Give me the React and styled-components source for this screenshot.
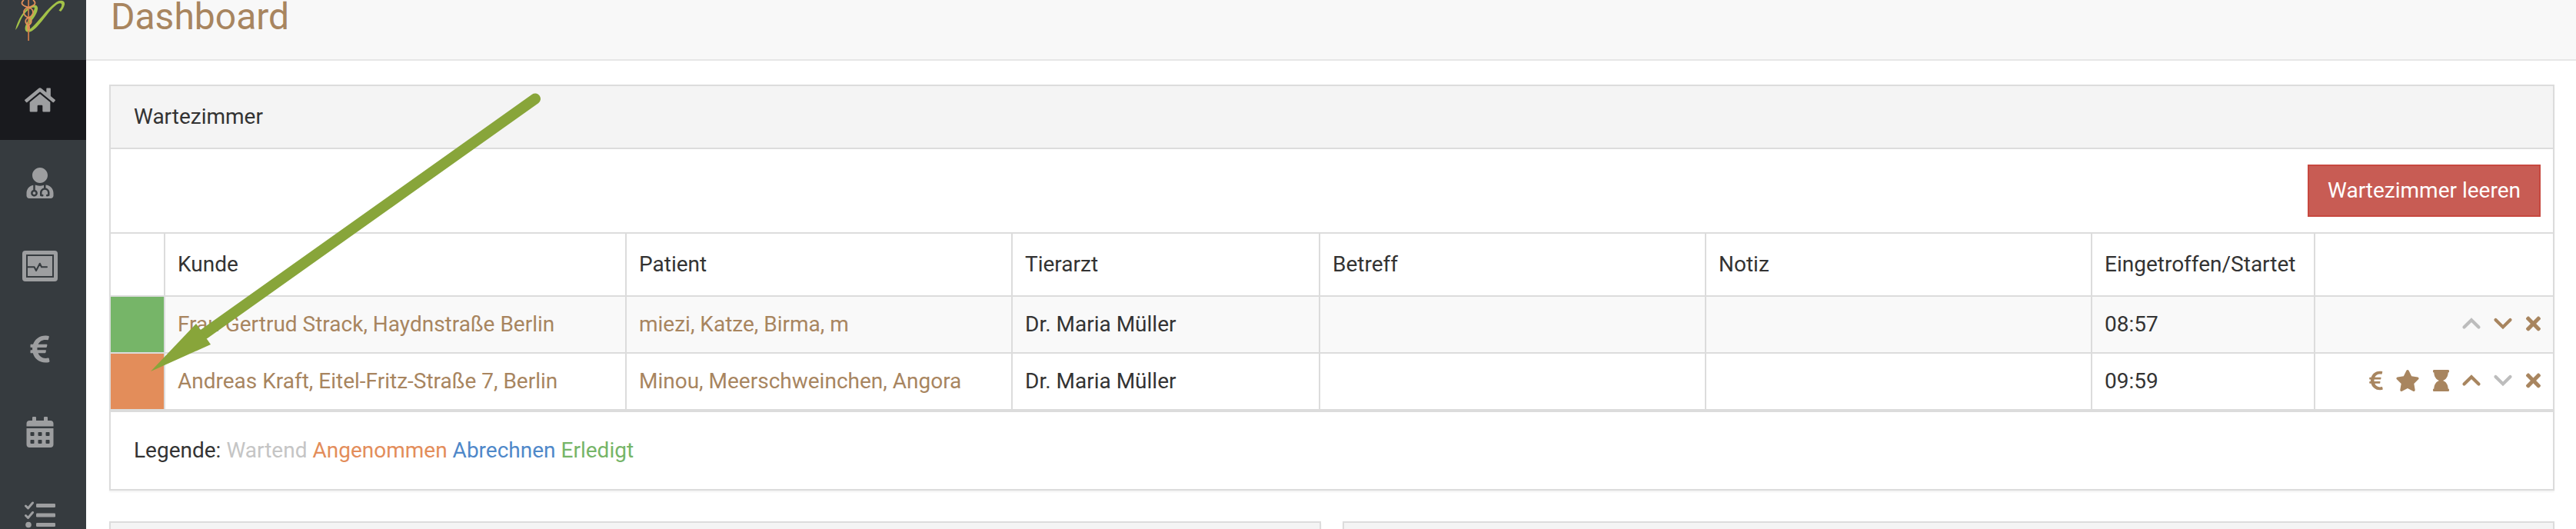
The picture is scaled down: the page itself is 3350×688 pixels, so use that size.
import React from 'react';
import styled, { createGlobalStyle } from 'styled-components';
import { FaHome, FaUserMd, FaEuroSign, FaCalendarAlt, FaStar, FaHourglass, FaTimes } from 'react-icons/fa';

const line = '#dcdcdc';
const brown = '#a8855f';

const GlobalStyle = createGlobalStyle`
  * { box-sizing: border-box; }
  body {
    margin: 0;
    background: #fff;
    color: #333;
    font-family: Roboto, "Liberation Sans", sans-serif;
    font-size: 28px;
    line-height: 40px;
    overflow: hidden;
  }
`;

const Page = styled.div`
  position: relative;
  display: flex;
  width: 3350px;
  height: 688px;
  overflow: hidden;
`;

const Sidebar = styled.nav`
  width: 112px;
  flex: none;
  display: flex;
  flex-direction: column;
  gap: 4px;
  background: #363b3f;
`;

const LogoBox = styled.div`
  height: 74px;
  flex: none;
  svg { display: block; }
`;

const NavItem = styled.a`
  height: 104px;
  flex: none;
  display: flex;
  align-items: center;
  justify-content: center;
  padding-right: 8px;
  color: #9d9ea0;
  background: ${(p) => (p.$active ? '#191a1e' : 'transparent')};
  svg { height: 40px; width: auto; display: block; }
`;

const Main = styled.main`
  flex: 1;
  min-width: 0;
`;

const PageHeader = styled.header`
  height: 79px;
  padding-left: 32px;
  background: #f8f8f8;
  border-bottom: 2px solid #e6e6e6;
  display: flow-root;
`;

const Title = styled.h1`
  margin: -7px 0 0;
  font-size: 48px;
  line-height: 58px;
  font-weight: 400;
  color: ${brown};
`;

const Content = styled.div`
  padding: 31px 28px 0 30px;
`;

const Panel = styled.section`
  border: 2px solid ${line};
  background: #fff;
  box-shadow: 0 2px 2px rgba(0, 0, 0, 0.05);
`;

const PanelHeading = styled.div`
  height: 82px;
  padding: 20px 30px 0;
  background: #f4f4f4;
  border-bottom: 2px solid ${line};
`;

const Toolbar = styled.div`
  height: 108px;
  padding: 20px 16px;
  display: flex;
  justify-content: flex-end;
`;

const DangerButton = styled.button`
  width: 303px;
  height: 68px;
  padding: 0;
  border: 2px solid #c7483f;
  background: #c85c54;
  color: #fff;
  font: inherit;
`;

const Table = styled.div`
  border-top: 2px solid ${line};
  border-bottom: 2px solid ${line};
`;

const Row = styled.div`
  display: grid;
  grid-template-columns: 71px 600px 502px 400px 502px 502px 290px 1fr;
  height: ${(p) => (p.$head ? 82 : 74)}px;
  border-bottom: 2px solid ${line};
  background: ${(p) => (p.$striped ? '#f9f9f9' : '#fff')};
`;

const Cell = styled.div`
  display: flex;
  align-items: center;
  padding: 0 16px;
  white-space: nowrap;
  border-right: 2px solid ${line};
  color: ${(p) => (p.$link ? brown : 'inherit')};
  background: ${(p) => p.$fill || 'transparent'};
  &:last-child { border-right: 0; }
`;

const Actions = styled(Cell)`
  justify-content: flex-end;
  padding-bottom: 3px;
`;

const Action = styled.span`
  width: ${(p) => p.$w}px;
  margin-left: ${(p) => p.$gap}px;
  display: block;
  color: ${(p) => (p.$off ? '#bdbdbd' : brown)};
  svg { display: block; width: 100%; height: 28px; overflow: visible; }
`;

const Legend = styled.div`
  height: 100px;
  padding: 30px 30px 0;
  display: flex;
  gap: 7px;
`;

const LegendItem = styled.span`
  color: ${(p) => p.$color || 'inherit'};
`;

const LowerPanels = styled.div`
  margin-top: 40px;
  display: grid;
  grid-template-columns: 1576px 1576px;
  gap: 28px;
`;

const Pointer = styled.svg`
  position: absolute;
  left: 190px;
  top: 115px;
`;

const Logo = () => (
  <svg width="112" height="74" viewBox="0 0 112 74" fill="none">
    <path d="M20 39C23 26 31 12 40 8C45 5 50 7 49 12C48 20 40 27 37 34C36 37 37 39 40 37C50 29 60 12 73 3C79 -1 85 1 84 6C83 10 81 13 79 15L76.500 13.500C79 11 81 8 80 5C77 2 71 8 67 12C58 22 50 35 42 40C36 44 31 41 33 34C36 25 44 17 45 10C40 8 31 17 27 26C25 31 23 36 20 39Z" fill="#a2c148" />
    <path d="M36.200 0H38V53H36.200Z" fill="#c87a48" />
    <g stroke="#e2905a" strokeWidth="1.8">
      <path d="M31 0C25 5 31 8 37 9.500C45 12 45 20 37 23C32 25 32 30 37 33C39 35 38 38 37 40" />
      <path d="M43 0C49 5 43 8 37 9.500C29 12 29 20 37 23C42 25 42 30 37 33C35 35 36 38 37 40" />
    </g>
  </svg>
);

const MonitorIcon = () => (
  <svg viewBox="0 0 46 40" fill="none">
    <rect width="46" height="40" rx="4" fill="currentColor" />
    <rect x="6" y="6" width="34" height="28" stroke="#363b3f" strokeWidth="2" />
    <path d="M7 21.3H15.6L18 26L22.8 16.7L25 21.3H32" stroke="#363b3f" strokeWidth="2" strokeLinecap="round" strokeLinejoin="round" />
  </svg>
);

const TasksIcon = () => (
  <svg viewBox="0 0 40 40" fill="none">
    <path d="M1.5 8L4.5 11L10.5 4M1.5 20.500L4.5 23.500L10.5 16.500" stroke="currentColor" strokeWidth="3" strokeLinecap="round" strokeLinejoin="round" />
    <g fill="currentColor">
      <circle cx="5" cy="32.5" r="3.8" />
      <rect x="15" y="5" width="25" height="5" rx="1.3" />
      <rect x="15" y="17.5" width="25" height="5" rx="1.3" />
      <rect x="15" y="30" width="25" height="5" rx="1.3" />
    </g>
  </svg>
);

const Chevron = ({ down }) => (
  <svg viewBox="0 0 24 28" fill="none">
    <path d={down ? 'M2.5 9L12 18.4L21.5 9' : 'M2.5 18.6L12 9.2L21.5 18.6'} stroke="currentColor" strokeWidth="4.2" strokeLinecap="round" />
  </svg>
);

const MoveActions = ({ upOff, downOff }) => (
  <>
    <Action $w={24} $gap={17} $off={upOff}><Chevron /></Action>
    <Action $w={24} $gap={17} $off={downOff}><Chevron down /></Action>
    <Action $w={19} $gap={18}><FaTimes /></Action>
  </>
);

const headings = ['', 'Kunde', 'Patient', 'Tierarzt', 'Betreff', 'Notiz', 'Eingetroffen/Startet', ''];

export default function App() {
  return (
    <Page>
      <GlobalStyle />
      <Sidebar>
        <LogoBox><Logo /></LogoBox>
        <NavItem $active><FaHome /></NavItem>
        <NavItem><FaUserMd /></NavItem>
        <NavItem><MonitorIcon /></NavItem>
        <NavItem><FaEuroSign /></NavItem>
        <NavItem><FaCalendarAlt /></NavItem>
        <NavItem><TasksIcon /></NavItem>
      </Sidebar>
      <Main>
        <PageHeader><Title>Dashboard</Title></PageHeader>
        <Content>
          <Panel>
            <PanelHeading>Wartezimmer</PanelHeading>
            <Toolbar><DangerButton>Wartezimmer leeren</DangerButton></Toolbar>
            <Table>
              <Row $head>
                {headings.map((h, i) => <Cell key={i}>{h}</Cell>)}
              </Row>
              <Row $striped>
                <Cell $fill="#76b568" />
                <Cell $link>Frau Gertrud Strack, Haydnstraße Berlin</Cell>
                <Cell $link>miezi, Katze, Birma, m</Cell>
                <Cell>Dr. Maria Müller</Cell>
                <Cell />
                <Cell />
                <Cell>08:57</Cell>
                <Actions><MoveActions upOff /></Actions>
              </Row>
              <Row>
                <Cell $fill="#e38d5a" />
                <Cell $link>Andreas Kraft, Eitel-Fritz-Straße 7, Berlin</Cell>
                <Cell $link>Minou, Meerschweinchen, Angora</Cell>
                <Cell>Dr. Maria Müller</Cell>
                <Cell />
                <Cell />
                <Cell>09:59</Cell>
                <Actions>
                  <Action $w={18} $gap={0}><FaEuroSign /></Action>
                  <Action $w={32} $gap={16}><FaStar /></Action>
                  <Action $w={21} $gap={17}><FaHourglass /></Action>
                  <MoveActions downOff />
                </Actions>
              </Row>
            </Table>
            <Legend>
              <LegendItem>Legende:</LegendItem>
              <LegendItem $color="#c5c5c5">Wartend</LegendItem>
              <LegendItem $color="#e38d5a">Angenommen</LegendItem>
              <LegendItem $color="#4f88c9">Abrechnen</LegendItem>
              <LegendItem $color="#76b568">Erledigt</LegendItem>
            </Legend>
          </Panel>
          <LowerPanels>
            <Panel><PanelHeading /></Panel>
            <Panel><PanelHeading /></Panel>
          </LowerPanels>
        </Content>
      </Main>
      <Pointer width="520" height="375" viewBox="190 115 520 375">
        <path d="M266 434L696 128.500" stroke="#88a53a" strokeWidth="14" strokeLinecap="round" />
        <path d="M196 483L255 421L274 448Z" fill="#88a53a" />
      </Pointer>
    </Page>
  );
}
